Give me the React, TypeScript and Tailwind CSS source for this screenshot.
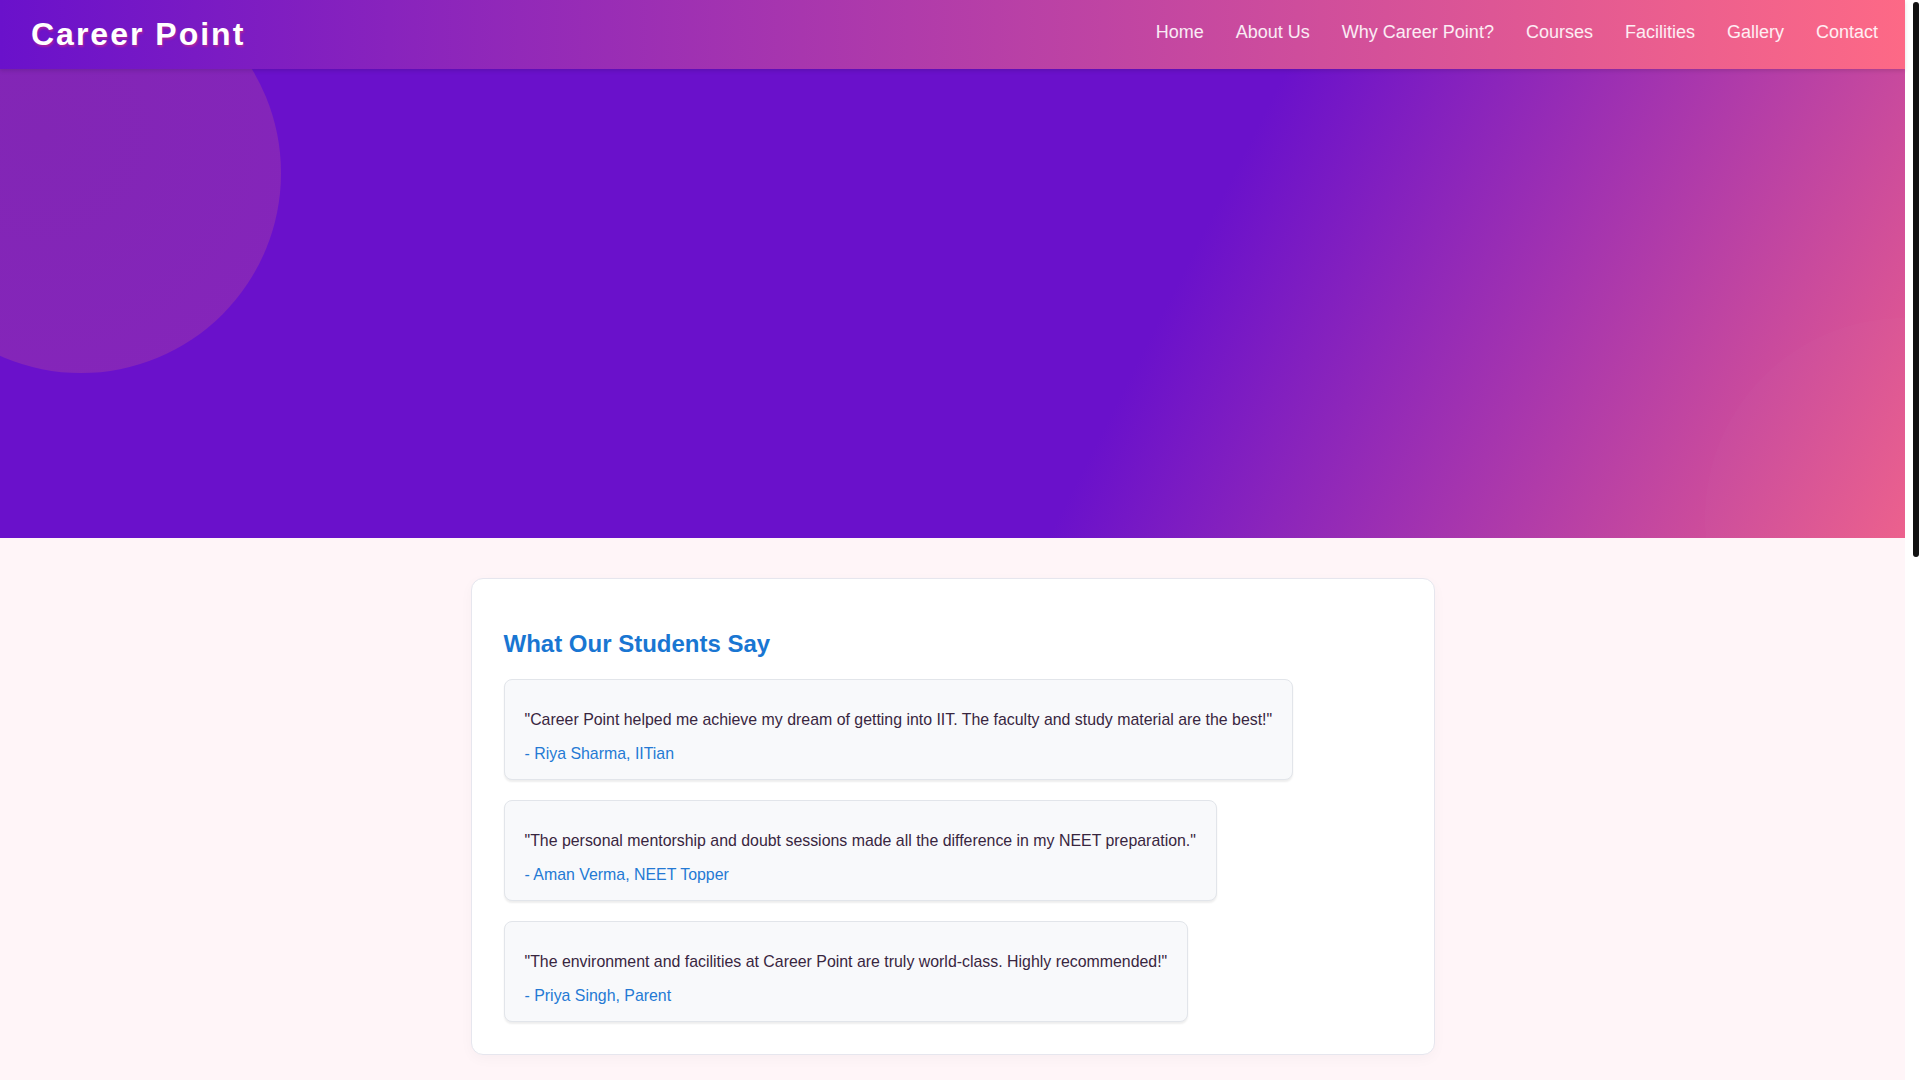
import React from "react";

const navItems = ["Home", "About Us", "Why Career Point?", "Courses", "Facilities", "Gallery", "Contact"];

const testimonials = [
  {
    quote: '"Career Point helped me achieve my dream of getting into IIT. The faculty and study material are the best!"',
    author: "- Riya Sharma, IITian",
  },
  {
    quote: '"The personal mentorship and doubt sessions made all the difference in my NEET preparation."',
    author: "- Aman Verma, NEET Topper",
  },
  {
    quote: '"The environment and facilities at Career Point are truly world-class. Highly recommended!"',
    author: "- Priya Singh, Parent",
  },
];

export default function App() {
  return (
    <div className="flex min-h-screen bg-[#fff5f8] font-['Liberation_Sans',Arial,sans-serif]">
      <div className="min-w-0 flex-1">
        <header className="relative z-10 flex h-[69px] items-center justify-between bg-[linear-gradient(90deg,#6a11cb,#fd6986)] pl-[31px] pr-[27px] shadow-[0_2px_4px_rgba(0,0,0,0.12)]">
          <div className="text-[32px] font-bold leading-[1.2] tracking-[2px] text-white [text-shadow:1px_2px_2px_rgba(214,40,130,0.55)]">
            Career Point
          </div>
          <nav className="mb-[5px] flex gap-8 text-[18px] leading-[1.5] text-white/90">
            {navItems.map((item) => (
              <a key={item} href="#" className="whitespace-nowrap">
                {item}
              </a>
            ))}
          </nav>
        </header>

        <section className="relative h-[469px] overflow-hidden bg-[linear-gradient(117deg,#6a11cb_60%,#ec5f8c_100%)]">
          <div className="absolute left-[-119px] top-[-96px] h-[400px] w-[400px] rounded-full bg-[radial-gradient(circle_at_40%_40%,#8226b5,#8525bb)]" />
          <div className="absolute bottom-[-180px] right-[-200px] h-[400px] w-[400px] rounded-full bg-white/[0.015]" />
        </section>

        <main className="pb-[1039px] pt-10">
          <div className="mx-auto w-[964px] rounded-xl border border-[#e6e6ee] bg-white px-8 pb-8 pt-[51px] shadow-[0_4px_14px_rgba(0,0,0,0.03)]">
            <h2 className="mb-5 text-[24px] font-bold leading-[1.2] text-[#1976d2]">What Our Students Say</h2>
            <div className="flex flex-col items-start gap-5">
              {testimonials.map((t) => (
                <div
                  key={t.author}
                  className="rounded-lg border border-[#e2e5ea] bg-[#f8f9fb] px-5 pb-[13px] pt-[28px] shadow-[0_2px_2px_rgba(0,0,0,0.07)]"
                >
                  <p className="text-[15.9px] leading-6 text-[#38263f]">{t.quote}</p>
                  <p className="mt-[10px] text-[15.9px] leading-6 text-[#2479d4]">{t.author}</p>
                </div>
              ))}
            </div>
          </div>
        </main>
      </div>

      <div className="sticky top-0 h-screen w-[15px] shrink-0 bg-white pl-[8px] pr-[1px] pt-[2px]">
        <div className="h-[555px] rounded-full bg-[#111111]" />
      </div>
    </div>
  );
}
